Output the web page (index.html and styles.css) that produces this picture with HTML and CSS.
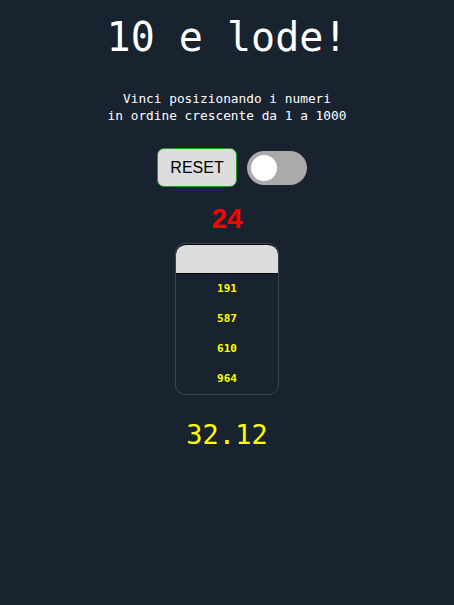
FILE: index.html
```html
<!DOCTYPE html>
<html lang="it">
<head>
<meta charset="utf-8">
<title>10 e lode!</title>
<link rel="stylesheet" href="styles.css">
</head>
<body>
<main class="app">
  <h1 class="title">10 e lode!</h1>
  <p class="subtitle">Vinci posizionando i numeri<br>in ordine crescente da 1 a 1000</p>
  <div class="controls">
    <button class="reset" type="button">RESET</button>
    <label class="switch">
      <input type="checkbox">
      <span class="slider"></span>
    </label>
  </div>
  <div class="current">24</div>
  <div class="board">
    <div class="board-head"></div>
    <ul class="board-list">
      <li>191</li>
      <li>587</li>
      <li>610</li>
      <li>964</li>
    </ul>
  </div>
  <div class="timer">32.12</div>
</main>
</body>
</html>
```
FILE: styles.css
```css
html, body {
  margin: 0;
  padding: 0;
  background: #19222f;
  height: 100%;
}
.app {
  display: flex;
  flex-direction: column;
  align-items: center;
  font-family: "DejaVu Sans Mono", monospace;
  color: #fff;
}
.title {
  margin: 14px 0 0;
  font-size: 40px;
  line-height: 46px;
  font-weight: normal;
}
.subtitle {
  margin: 30px 0 0;
  font-size: 12.8px;
  line-height: 17px;
  text-align: center;
}
.controls {
  margin-top: 24px;
  padding-left: 10px;
  display: flex;
  align-items: center;
  gap: 10px;
}
.reset {
  width: 80px;
  height: 39px;
  background: #dddddd;
  border: 1px solid #1e9b1e;
  border-radius: 7px;
  font-family: "Liberation Sans", Arial, sans-serif;
  font-size: 16px;
  color: #000;
  padding: 0;
}
.switch {
  position: relative;
  display: inline-block;
  width: 60px;
  height: 34px;
}
.switch input {
  opacity: 0;
  width: 0;
  height: 0;
}
.slider {
  position: absolute;
  inset: 0;
  background: #aaaaaa;
  border-radius: 34px;
}
.slider::before {
  content: "";
  position: absolute;
  left: 4px;
  bottom: 4px;
  width: 26px;
  height: 26px;
  border-radius: 50%;
  background: #fff;
}
.current {
  margin-top: 16px;
  font-family: "Liberation Sans", Arial, sans-serif;
  font-weight: bold;
  font-size: 28px;
  line-height: 32px;
  color: #ff0000;
}
.board {
  margin-top: 8px;
  width: 102px;
  border: 1px solid #3b4552;
  border-radius: 10px;
  overflow: hidden;
}
.board-head {
  height: 28px;
  background: #dddddd;
  border-top: 1px solid #000;
  border-bottom: 1px solid #000;
  border-radius: 10px 10px 0 0;
}
.board-list {
  list-style: none;
  margin: 0;
  padding: 0;
}
.board-list li {
  height: 30px;
  line-height: 30px;
  text-align: center;
  font-size: 11px;
  font-weight: bold;
  color: #ffff00;
}
.timer {
  margin-top: 24px;
  font-size: 27px;
  line-height: 32px;
  color: #ffff00;
}
```
